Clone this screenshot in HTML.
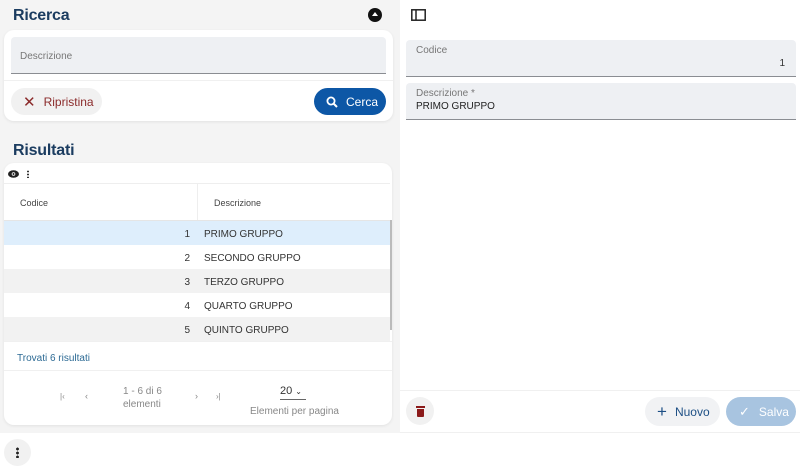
<!DOCTYPE html>
<html><head><meta charset="utf-8"><style>
*{box-sizing:border-box;margin:0;padding:0}
body{width:800px;height:473px;overflow:hidden;background:#fff;font-family:"Liberation Sans",sans-serif;position:relative;color:#222}
.abs{position:absolute}
.left{left:0;top:0;width:400px;height:433px;background:#f4f4f4}
.title{font-size:16px;font-weight:bold;color:#1b3c60;letter-spacing:-0.2px}
.card{background:#fff;border-radius:10px;box-shadow:0 1px 3px rgba(0,0,0,.08)}
.field{background:#eef0f3;border-bottom:1px solid #8a8d92;border-radius:4px 4px 0 0}
.lbl{font-size:10px;color:#777}
.row{position:absolute;left:0;width:386px;height:24px;font-size:10px;color:#333}
.row .n{position:absolute;left:0;width:186px;text-align:right;top:8px}
.row .d{position:absolute;left:200px;top:8px}
.btn{border-radius:15px;font-size:12px;display:flex;align-items:center}
</style></head><body>
<div class="abs left"></div>
<div class="abs title" style="left:13px;top:7px">Ricerca</div>
<div class="abs" style="left:368px;top:8px;width:14px;height:14px;border-radius:50%;background:#111"><div style="position:absolute;left:4px;top:4px;width:0;height:0;border-left:3px solid transparent;border-right:3px solid transparent;border-bottom:4px solid #fff"></div></div>
<div class="abs card" style="left:4px;top:30px;width:389px;height:91px"></div>
<div class="abs field" style="left:11px;top:37px;width:375px;height:37px"><div class="lbl" style="position:absolute;left:9px;top:14px">Descrizione</div></div>
<div class="abs" style="left:4px;top:80px;width:389px;height:1px;background:#f0f0f0"></div>
<div class="abs btn" style="left:11px;top:88px;width:91px;height:27px;background:#f1f1f1;color:#8b2b2b"><span style="margin-left:12px;font-size:15px;margin-right:8px">✕</span>Ripristina</div>
<div class="abs btn" style="left:314px;top:88px;width:72px;height:27px;background:#0d57a6;color:#fff"><svg style="margin-left:12px;margin-right:8px" width="12" height="12" viewBox="0 0 12 12"><circle cx="5" cy="5" r="3.6" stroke="#fff" stroke-width="1.8" fill="none"/><path d="M7.5 7.5L11 11" stroke="#fff" stroke-width="2"/></svg>Cerca</div>
<div class="abs title" style="left:13px;top:142px">Risultati</div>
<div class="abs card" style="left:4px;top:163px;width:388px;height:262px;overflow:hidden">
 <svg style="position:absolute;left:4px;top:7px" width="11" height="8" viewBox="0 0 11 8"><ellipse cx="5.5" cy="4" rx="5.5" ry="3.8" fill="#222"/><circle cx="5.5" cy="4" r="1.8" fill="#fff"/><circle cx="5.5" cy="4" r="1" fill="#222"/></svg>
 <div style="position:absolute;left:23px;top:7px;width:2px;height:8px;background:radial-gradient(circle,#333 50%,transparent 55%) 0 0/2px 3px"></div>
 <div style="position:absolute;left:0;top:20px;width:386px;height:1px;background:#eee"></div>
 <div style="position:absolute;left:193px;top:20px;width:1px;height:157px;background:#eee"></div>
 <div class="lbl" style="position:absolute;left:16px;top:35px;color:#444;font-size:9px">Codice</div>
 <div class="lbl" style="position:absolute;left:210px;top:35px;color:#444;font-size:9px">Descrizione</div>
 <div style="position:absolute;left:0;top:57px;width:386px;height:1px;background:#e5e5e5"></div>
 <div class="row" style="top:58px;background:#deeefc"><span class="n">1</span><span class="d">PRIMO GRUPPO</span></div>
 <div class="row" style="top:82px;background:#fff"><span class="n">2</span><span class="d">SECONDO GRUPPO</span></div>
 <div class="row" style="top:106px;background:#f2f2f2"><span class="n">3</span><span class="d">TERZO GRUPPO</span></div>
 <div class="row" style="top:130px;background:#fff"><span class="n">4</span><span class="d">QUARTO GRUPPO</span></div>
 <div class="row" style="top:154px;background:#f2f2f2"><span class="n">5</span><span class="d">QUINTO GRUPPO</span></div>
 <div style="position:absolute;left:386px;top:57px;width:2px;height:110px;background:#bbb"></div>
 <div style="position:absolute;left:0;top:178px;width:388px;height:1px;background:#f0f0f0"></div>
 <div style="position:absolute;left:13px;top:190px;font-size:10px;color:#2c6a94">Trovati 6 risultati</div>
 <div style="position:absolute;left:0;top:207px;width:388px;height:1px;background:#f0f0f0"></div>
 <div style="position:absolute;left:56px;top:229px;font-size:8px;color:#888">|‹</div>
 <div style="position:absolute;left:81px;top:228px;font-size:9px;color:#888">‹</div>
 <div style="position:absolute;left:119px;top:222px;font-size:10px;color:#888;line-height:13px">1 - 6 di 6<br>elementi</div>
 <div style="position:absolute;left:191px;top:228px;font-size:9px;color:#888">›</div>
 <div style="position:absolute;left:212px;top:229px;font-size:8px;color:#888">›|</div>
 <div style="position:absolute;left:276px;top:222px;font-size:11px;color:#333">20 <span style="font-size:8px">⌄</span></div>
 <div style="position:absolute;left:276px;top:236px;width:26px;height:1px;background:#666"></div>
 <div style="position:absolute;left:246px;top:243px;font-size:10px;color:#888">Elementi per pagina</div>
</div>
<div class="abs" style="left:4px;top:439px;width:27px;height:27px;border-radius:50%;background:#f1f1f1"><div style="position:absolute;left:12px;top:8px;width:3px;height:11px;background:radial-gradient(circle,#222 55%,transparent 60%) 0 0/3px 4px"></div></div>
<svg class="abs" style="left:411px;top:9px" width="15" height="12" viewBox="0 0 15 12"><rect x="0.8" y="0.8" width="13.4" height="10.4" fill="none" stroke="#222" stroke-width="1.5"/><path d="M5 1v10" stroke="#222" stroke-width="1.5"/></svg>
<div class="abs field" style="left:406px;top:40px;width:390px;height:37px"><div class="lbl" style="position:absolute;left:10px;top:5px">Codice</div><div style="position:absolute;right:11px;top:18px;font-size:10px;color:#333">1</div></div>
<div class="abs field" style="left:406px;top:83px;width:390px;height:37px"><div class="lbl" style="position:absolute;left:10px;top:5px">Descrizione *</div><div style="position:absolute;left:10px;top:18px;font-size:10px;color:#222">PRIMO GRUPPO</div></div>
<div class="abs" style="left:400px;top:390px;width:400px;height:1px;background:#f0f0f0"></div>
<div class="abs" style="left:400px;top:432px;width:400px;height:1px;background:#f0f0f0"></div>
<div class="abs" style="left:406px;top:397px;width:28px;height:28px;border-radius:50%;background:#f1f1f1"><div style="position:absolute;left:10px;top:9px;width:9px;height:2px;background:#8b1a1a"></div><div style="position:absolute;left:11px;top:12px;width:7px;height:8px;background:#8b1a1a;border-radius:0 0 1px 1px"></div></div>
<div class="abs btn" style="left:645px;top:397px;width:75px;height:29px;background:#f1f2f4;color:#1d4f85"><span style="margin-left:12px;margin-right:8px;font-size:17px">+</span>Nuovo</div>
<div class="abs btn" style="left:726px;top:397px;width:70px;height:29px;background:#a8c4e0;color:#fff"><span style="margin-left:13px;margin-right:9px;font-size:13px">✓</span>Salva</div>
</body></html>
